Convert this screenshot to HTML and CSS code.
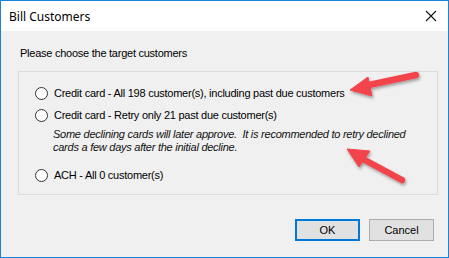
FILE: index.html
```html
<!DOCTYPE html>
<html>
<head>
<meta charset="utf-8">
<link rel="stylesheet" href="styles.css">
</head>
<body>
<div class="window">
  <div class="titlebar">
    <span class="title">Bill Customers</span>
    <svg class="close" width="12" height="12" viewBox="0 0 12 12"><path d="M1 1L11 11M11 1L1 11" stroke="#111" stroke-width="1.1"/></svg>
  </div>
  <div class="content">
    <div class="prompt">Please choose the target customers</div>
    <div class="group">
      <div class="option"><span class="radio"></span><span class="label">Credit card - All 198 customer(s), including past due customers</span></div>
      <div class="option"><span class="radio"></span><span class="label">Credit card - Retry only 21 past due customer(s)</span></div>
      <div class="note">Some declining cards will later approve.&nbsp; It is recommended to retry declined cards a few days after the initial decline.</div>
      <div class="option ach"><span class="radio"></span><span class="label">ACH - All 0 customer(s)</span></div>
    </div>
    <div class="buttons">
      <div class="btn default">OK</div>
      <div class="btn">Cancel</div>
    </div>
  </div>
  <svg class="arrows" width="449" height="258" viewBox="0 0 449 258">
    <defs>
      <filter id="sh" x="-20%" y="-20%" width="140%" height="140%">
        <feDropShadow dx="1" dy="2" stdDeviation="1.5" flood-color="#000" flood-opacity="0.35"/>
      </filter>
    </defs>
    <g fill="#f2444c" stroke="#f2444c" filter="url(#sh)">
      <line x1="364" y1="86" x2="416" y2="75" stroke-width="6.5" stroke-linecap="round"/>
      <polygon points="350,90 368,77 372,96" stroke-width="1" stroke-linejoin="round"/>
      <line x1="361" y1="158" x2="402" y2="180" stroke-width="6.5" stroke-linecap="round"/>
      <polygon points="347,149 370,151 359,167" stroke-width="1" stroke-linejoin="round"/>
    </g>
  </svg>
</div>
</body>
</html>
```
FILE: styles.css
```css
html, body {
  margin: 0;
  padding: 0;
}
body {
  width: 449px;
  height: 258px;
  overflow: hidden;
  font-family: "Liberation Sans", Arial, sans-serif;
  font-size: 11px;
  letter-spacing: -0.25px;
  color: #000;
}
.window {
  position: relative;
  width: 449px;
  height: 258px;
  box-sizing: border-box;
  border: 1px solid #1883d7;
  display: flex;
  flex-direction: column;
  background: #f0f0f0;
}
.titlebar {
  height: 30px;
  background: #fff;
  display: flex;
  align-items: center;
  justify-content: space-between;
  padding: 0 11px 0 8px;
  flex: none;
}
.title {
  font-family: "Noto Sans", sans-serif;
  font-size: 12px;
  letter-spacing: 0;
  padding-top: 1px;
}
.close {
  display: block;
}
.content {
  flex: 1;
  padding: 0 10px 0 17px;
  display: flex;
  flex-direction: column;
}
.prompt {
  margin-top: 15px;
  padding-left: 2px;
  height: 14px;
  line-height: 14px;
}
.group {
  margin-top: 11px;
  height: 124px;
  box-sizing: border-box;
  border: 1px solid #dcdcdc;
  padding: 14px 0 0 16px;
}
.option {
  display: flex;
  align-items: center;
  height: 14px;
  line-height: 14px;
  margin-bottom: 8px;
}
.radio {
  width: 11px;
  height: 11px;
  border: 1px solid #333;
  border-radius: 50%;
  background: #fff;
  flex: none;
  margin-right: 6px;
}
.option:nth-child(2) {
  margin-top: 1px;
}
.note {
  font-style: italic;
  color: #111;
  padding-left: 18px;
  line-height: 13px;
  margin-top: -2px;
  width: 362px;
}
.option.ach {
  margin-top: 14px;
}
.buttons {
  display: flex;
  justify-content: flex-end;
  gap: 9px;
  margin-top: 24px;
  padding-right: 4px;
}
.btn {
  width: 65px;
  height: 22px;
  box-sizing: border-box;
  border: 1px solid #adadad;
  background: #e1e1e1;
  display: flex;
  align-items: center;
  justify-content: center;
  letter-spacing: 0;
}
.btn.default {
  border: 2px solid #0078d7;
}
.arrows {
  position: absolute;
  left: -1px;
  top: -1px;
  pointer-events: none;
}
```
